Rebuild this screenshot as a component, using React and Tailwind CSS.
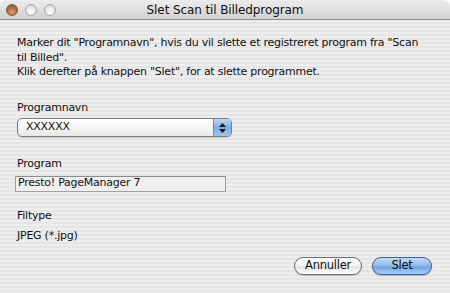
import React from "react";

const font = { fontFamily: '"DejaVu Sans", sans-serif' };

const TrafficLight = ({ active }) =>
  active ? (
    <span className="w-[12px] h-[12px] rounded-full border border-[#7a5a44] bg-[radial-gradient(circle_at_50%_70%,#e0a070_0%,#b07048_50%,#7a4a30_100%)]" />
  ) : (
    <span className="w-[12px] h-[12px] rounded-full border border-[#a8a8a8] bg-[radial-gradient(circle_at_50%_70%,#ffffff_0%,#e4e4e4_60%,#c8c8c8_100%)]" />
  );

export default function App() {
  return (
    <div
      className="w-[450px] h-[293px] bg-white overflow-hidden text-[#111]"
      style={font}
    >
      <div className="w-full h-full flex flex-col rounded-t-[6px] overflow-hidden">
        {/* title bar */}
        <div className="relative h-[20px] flex items-center bg-[linear-gradient(#ececec,#d2d2d2)] border-b border-[#8a8a8a]">
          <div className="flex items-center gap-[7px] pl-[6px]">
            <TrafficLight active />
            <TrafficLight />
            <TrafficLight />
          </div>
          <div className="absolute inset-0 flex items-center justify-center text-[12px] tracking-[-0.1px] text-[#111]">
            Slet Scan til Billedprogram
          </div>
        </div>

        {/* body */}
        <div className="flex-1 flex flex-col bg-[repeating-linear-gradient(#ededed_0px,#ededed_2px,#e5e5e5_2px,#e5e5e5_4px)] px-[17px] pt-[16px] text-[11px] tracking-[-0.25px] leading-[14.5px]">
          <p className="whitespace-nowrap">
            Marker dit "Programnavn", hvis du vil slette et registreret program fra "Scan
            <br />
            til Billed".
            <br />
            Klik derefter på knappen "Slet", for at slette programmet.
          </p>

          <p className="mt-[21px]">Programnavn</p>
          <div className="mt-[3px] w-[215px] h-[19px] flex rounded-[5px] border border-[#7d7d7d] bg-[linear-gradient(#ffffff,#f4f4f4_50%,#e8e8e8)] shadow-[0_1px_1px_rgba(0,0,0,0.15)] overflow-hidden">
            <span className="flex-1 pl-[8px] flex items-center">XXXXXX</span>
            <span className="w-[18px] flex flex-col items-center justify-center gap-[2px] border-l border-[#6b8cb8] bg-[linear-gradient(#bcd6f2,#7eaee4_50%,#9cc4f0)]">
              <svg width="7" height="4" viewBox="0 0 7 4">
                <path d="M0 4 L3.5 0 L7 4 Z" fill="#1a1a1a" />
              </svg>
              <svg width="7" height="4" viewBox="0 0 7 4">
                <path d="M0 0 L3.5 4 L7 0 Z" fill="#1a1a1a" />
              </svg>
            </span>
          </div>

          <p className="mt-[20px]">Program</p>
          <div className="mt-[4px] -ml-[2px] w-[211px] h-[16px] flex items-center pl-[2px] border border-[#a0a0a0] border-t-[#8c8c8c] bg-[#efefef]">
            Presto! PageManager 7
          </div>

          <p className="mt-[17px]">Filtype</p>
          <p className="mt-[6px]">JPEG (*.jpg)</p>

          <div className="mt-[13px] flex justify-end gap-[10px] pr-[1px]">
            <button className="w-[68px] h-[18px] rounded-full border border-[#6e6e6e] bg-[linear-gradient(#ffffff,#f2f2f2_50%,#e2e2e2_55%,#ffffff)] text-[11.5px] leading-none shadow-[0_1px_1px_rgba(0,0,0,0.2)]">
              Annuller
            </button>
            <button className="w-[60px] h-[18px] rounded-full border border-[#3b5f95] bg-[linear-gradient(#c6dcf6,#8db9ea_50%,#6ea4e2_55%,#a9d0f7)] text-[11.5px] leading-none shadow-[0_1px_1px_rgba(0,0,0,0.25)]">
              Slet
            </button>
          </div>
        </div>
      </div>
    </div>
  );
}
